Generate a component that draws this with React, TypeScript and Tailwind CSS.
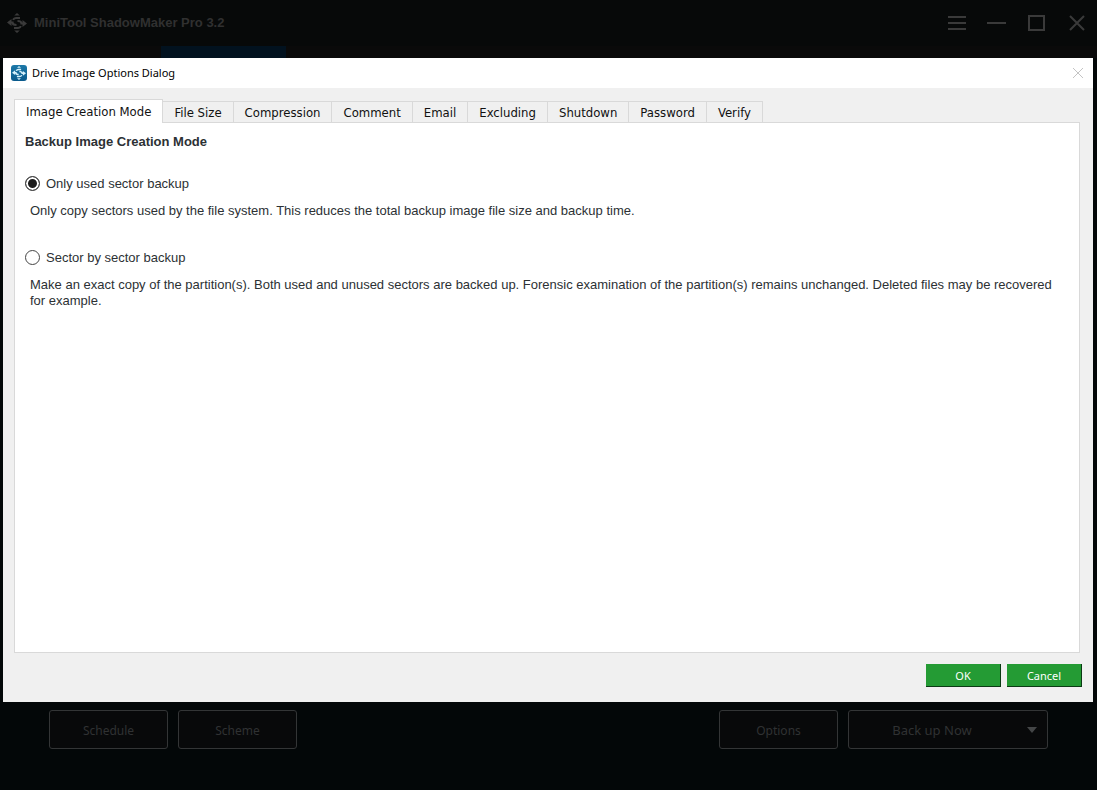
import { useState } from 'react';

const tabs = [
  'Image Creation Mode',
  'File Size',
  'Compression',
  'Comment',
  'Email',
  'Excluding',
  'Shutdown',
  'Password',
  'Verify',
];

const modes = [
  {
    id: 'used-sector',
    label: 'Only used sector backup',
    description:
      'Only copy sectors used by the file system. This reduces the total backup image file size and backup time.',
  },
  {
    id: 'sector-by-sector',
    label: 'Sector by sector backup',
    description:
      'Make an exact copy of the partition(s). Both used and unused sectors are backed up. Forensic examination of the partition(s) remains unchanged. Deleted files may be recovered for example.',
  },
];

// Two opposed arrows with a small triangle above and below
function LogoMark({ className }: { className: string }) {
  return (
    <svg viewBox="0 0 20 20" className={className} fill="currentColor" aria-hidden="true">
      <path d="M10 0 12.800 2.400H7.200ZM10 20 7.200 17.600h5.600Z" />
      <path d="M0 9.500 4.500 6v7ZM20 10.500 15.500 14V7Z" />
      <path d="M4 9.500h1.500C5.500 11 7 12 9.500 12M16 10.500h-1.500C14.500 9 13 8 10.500 8" fill="none" stroke="currentColor" strokeWidth="2.2" />
      <path d="M13 5H9.500C7.500 5 6.500 5.800 6.200 7M7 15h3.500c2 0 3-.8 3.300-2" fill="none" stroke="currentColor" strokeWidth="1.800" />
    </svg>
  );
}

function TitleBar() {
  return (
    <header className="flex h-[46px] items-center justify-between pl-[7px] pr-[10px] text-[#3a3a3a]">
      <div className="flex items-center gap-[7px]">
        <LogoMark className="size-5" />
        <h1 className="font-['Liberation_Sans',sans-serif] text-[13px] font-bold text-[#303030]">
          MiniTool ShadowMaker Pro 3.2
        </h1>
      </div>
      <div className="flex items-center gap-5">
        <button type="button" aria-label="Menu">
          <svg viewBox="0 0 20 20" className="size-5" stroke="currentColor" strokeWidth="2" fill="none">
            <path d="M1 4h18M1 10h18M1 16h18" />
          </svg>
        </button>
        <button type="button" aria-label="Minimize">
          <svg viewBox="0 0 20 20" className="size-5" stroke="currentColor" strokeWidth="2" fill="none">
            <path d="M0 10h19" />
          </svg>
        </button>
        <button type="button" aria-label="Maximize">
          <svg viewBox="0 0 20 20" className="size-5" stroke="currentColor" strokeWidth="2" fill="none">
            <path d="M2 3h15v14H2Z" />
          </svg>
        </button>
        <button type="button" aria-label="Close window">
          <svg viewBox="0 0 20 20" className="size-5" stroke="currentColor" strokeWidth="2" fill="none">
            <path d="M3 3 17 17M17 3 3 17" />
          </svg>
        </button>
      </div>
    </header>
  );
}

function OptionsDialog() {
  const [activeTab, setActiveTab] = useState(tabs[0]);
  const [mode, setMode] = useState(modes[0].id);

  return (
    <section
      role="dialog"
      aria-labelledby="dialog-title"
      className="ml-[3px] mr-1 flex flex-1 flex-col bg-[#f0f0f0]"
    >
      <div className="flex h-[30px] items-center justify-between bg-white px-2">
        <div className="flex items-center gap-[5px]">
          <span className="flex size-4 items-center justify-center rounded-[3px] bg-gradient-to-b from-[#1c78a8] to-[#0a5a8c] text-[#d8f2fc]">
            <LogoMark className="size-[14px]" />
          </span>
          <h2 id="dialog-title" className="font-['Noto_Sans',sans-serif] text-[11px] text-black">
            Drive Image Options Dialog
          </h2>
        </div>
        <button type="button" aria-label="Close" className="text-[#c4c4c4]">
          <svg viewBox="0 0 14 14" className="size-[14px]" stroke="currentColor" fill="none">
            <path d="M2 2 12 12M12 2 2 12" />
          </svg>
        </button>
      </div>

      <div className="flex flex-1 flex-col pl-[11px] pr-[13px] pt-[11px]">
        <div
          role="tablist"
          className="z-10 -mb-px flex h-6 items-end font-['DejaVu_Sans_Condensed','DejaVu_Sans',sans-serif] text-[13px] text-[#111]"
        >
          {tabs.map((tab) => (
            <button
              key={tab}
              type="button"
              role="tab"
              aria-selected={tab === activeTab}
              onClick={() => setActiveTab(tab)}
              className={
                tab === activeTab
                  ? 'h-6 border-x border-t border-[#d9d9d9] bg-white px-[11px]'
                  : 'h-[22px] border-y border-r border-[#d9d9d9] px-[11px] pt-px'
              }
            >
              {tab}
            </button>
          ))}
        </div>

        <div
          role="tabpanel"
          className="flex-1 border border-[#d9d9d9] bg-white px-[10px] pt-[11px] font-['Liberation_Sans',sans-serif] text-[13px] leading-4 text-[#2c3134]"
        >
          <h3 className="font-bold">Backup Image Creation Mode</h3>
          <div className="mt-[26px] flex flex-col gap-[31px]">
            {modes.map((item) => (
              <div key={item.id}>
                <div className="flex items-start gap-[6px]">
                  <input
                    type="radio"
                    id={item.id}
                    name="mode"
                    checked={mode === item.id}
                    onChange={() => setMode(item.id)}
                    className="size-[15px] appearance-none rounded-full border border-[#444] bg-white checked:bg-[#1c1c1c] checked:shadow-[inset_0_0_0_2px_white]"
                  />
                  <label htmlFor={item.id}>{item.label}</label>
                </div>
                <p className="mt-[11px] pl-[5px] pr-2">{item.description}</p>
              </div>
            ))}
          </div>
        </div>

        <div className="-mr-[2px] flex justify-end gap-[6px] pb-[15px] pt-[11px] font-['Noto_Sans',sans-serif] text-[11px] text-white">
          <button
            type="button"
            className="h-[23px] w-[75px] border-b border-r border-[#0b3a14] bg-[#249b34] pt-[2px]"
          >
            OK
          </button>
          <button
            type="button"
            className="h-[23px] w-[75px] border-b border-r border-[#0b3a14] bg-[#249b34] pt-[2px]"
          >
            Cancel
          </button>
        </div>
      </div>
    </section>
  );
}

function FooterBar() {
  const buttonClass = 'h-[39px] w-[119px] rounded-[3px] border border-[#333536] bg-[#08090a] pt-[2px]';

  return (
    <footer className="flex h-[88px] items-start justify-between px-[49px] pt-2 font-['Noto_Sans',sans-serif] text-[12px] text-[#303233]">
      <div className="flex gap-[10px]">
        <button type="button" className={buttonClass}>
          Schedule
        </button>
        <button type="button" className={buttonClass}>
          Scheme
        </button>
      </div>
      <div className="flex gap-[10px]">
        <button type="button" className={buttonClass}>
          Options
        </button>
        <button
          type="button"
          className="flex h-[39px] w-[200px] items-center rounded-[3px] border border-[#333536] bg-[#08090a] pr-[10px] text-[13px]"
        >
          <span className="flex-1 pr-3 pt-[2px]">Back up Now</span>
          <svg viewBox="0 0 10 6" className="h-[6px] w-[10px]" fill="#444647" aria-hidden="true">
            <path d="M0 0h10L5 6Z" />
          </svg>
        </button>
      </div>
    </footer>
  );
}

export default function App() {
  return (
    <main className="flex min-h-screen flex-col bg-[#030708]">
      <div className="bg-[#070909]">
        <TitleBar />
        <div className="flex h-3 bg-[#0a0a0a] pl-[161px]">
          <div className="w-[125px] bg-[#02121f]" />
        </div>
      </div>
      <OptionsDialog />
      <FooterBar />
    </main>
  );
}
